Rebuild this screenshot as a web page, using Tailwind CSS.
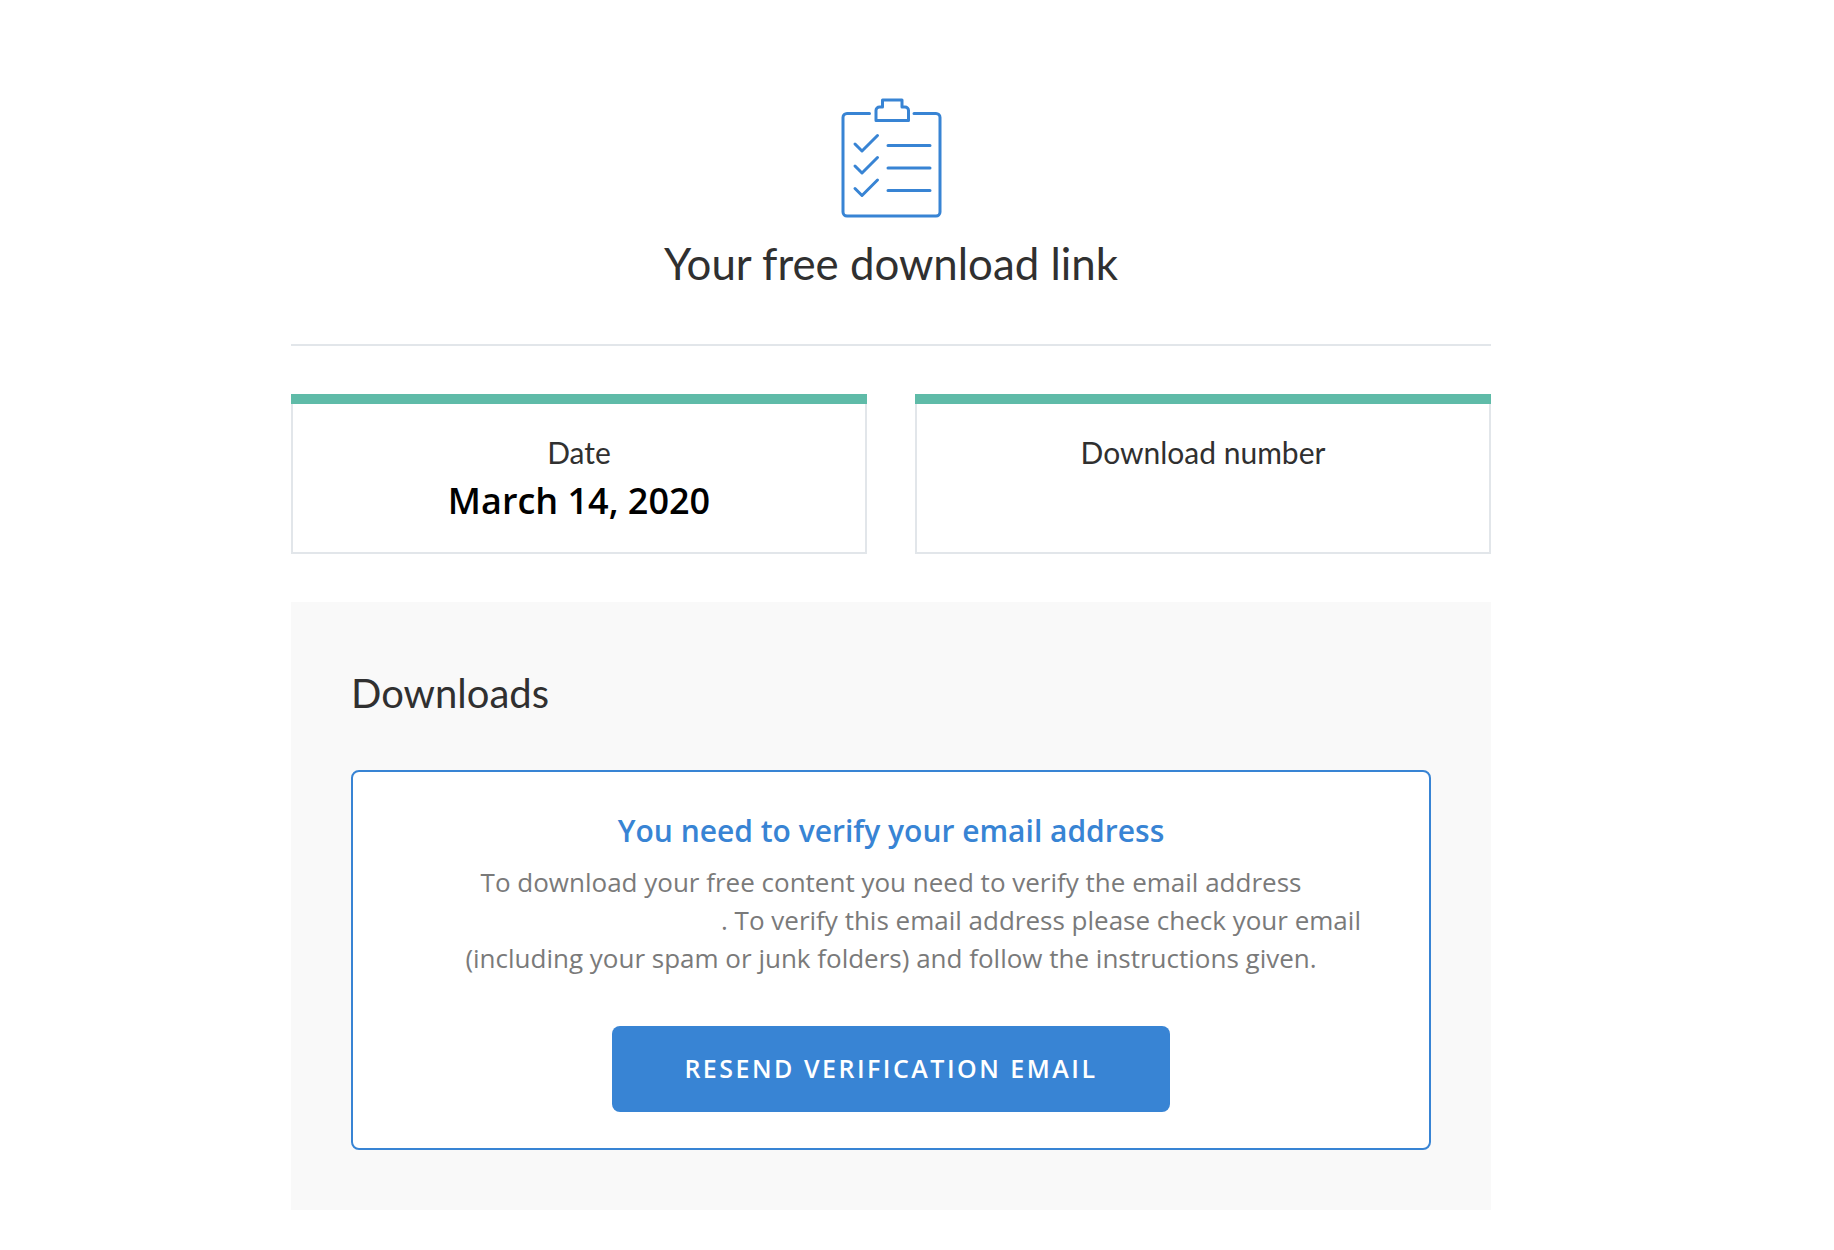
<!DOCTYPE html>
<html lang="en">
<head>
    <meta charset="UTF-8">
    <meta name="viewport" content="width=device-width, initial-scale=1.0">
    <title>Your free download link</title>
    <script src="https://cdn.jsdelivr.net/npm/@tailwindcss/browser@4"></script>
</head>
<body class="min-h-screen bg-white font-['Open_Sans',sans-serif]">
    <div class="w-[1200px] ml-[291px] pt-[98px]">
        <!-- Header -->
        <div class="flex flex-col items-center border-b-2 border-[#e2e6ea] h-[248px]">
            <svg class="w-[100px] h-[120px] shrink-0 overflow-visible" viewBox="0 0 100 120" fill="none" stroke="#3884d4" stroke-width="3" stroke-linecap="round" stroke-linejoin="round">
                <path d="M28.500 15.500H6a4 4 0 0 0-4 4V114a4 4 0 0 0 4 4h89a4 4 0 0 0 4-4V19.500a4 4 0 0 0-4-4H73"/>
                <path d="M35 22.500V12.500a3.500 3.500 0 0 1 3.500-3.500H41.500V2H61V9h3a3.500 3.500 0 0 1 3.500 3.500V22.500z"/>
                <path d="M14 46l7 7L36.500 37.500M14 68l7 7L36.500 59.500M14 90.500l7 7L36.500 82"/>
                <path d="M47 47.500H89M47 70H89M47 92.500H89"/>
            </svg>
            <h1 class="font-['Lato',sans-serif] text-[43.800px] leading-[56px] text-[#303030] mt-[17px]">Your free download link</h1>
        </div>

        <!-- Date and number -->
        <div class="grid grid-cols-2 gap-[48px] mt-[48px]">
            <div class="h-[160px] border-2 border-t-0 border-[#e2e6ea] text-center">
                <div class="h-[10px] -mx-[2px] bg-[#5fbba8]"></div>
                <div class="font-['Lato',sans-serif] text-[30px] leading-[38px] text-[#303030] mt-[29px]">Date</div>
                <div class="text-[36px] leading-[48px] font-semibold text-black mt-[6px]">March 14, 2020</div>
            </div>
            <div class="h-[160px] border-2 border-t-0 border-[#e2e6ea] text-center">
                <div class="h-[10px] -mx-[2px] bg-[#5fbba8]"></div>
                <div class="font-['Lato',sans-serif] text-[30px] leading-[38px] text-[#303030] mt-[29px]">Download number</div>
            </div>
        </div>

        <!-- Downloads -->
        <div class="bg-[#f9f9f9] mt-[48px] h-[608px] px-[60px] pt-[65px]">
            <h2 class="font-['Lato',sans-serif] text-[40px] leading-[52px] text-[#303030]">Downloads</h2>
            <div class="mt-[51px] h-[380px] bg-white border-2 border-[#3884d4] rounded-[8px] text-center pt-[39px]">
                <h3 class="text-[30px] leading-[40px] font-semibold text-[#3884d4]">You need to verify your email address</h3>
                <p class="text-[26px] leading-[38px] text-[#7a7a7a] mt-[12px]">
                    To download your free content you need to verify the email address<br>
                    <span class="inline-block w-[300px]"></span>. To verify this email address please check your email<br>
                    (including your spam or junk folders) and follow the instructions given.
                </p>
                <button class="mt-[49px] w-[558px] h-[86px] bg-[#3884d4] rounded-[8px] text-white text-[25px] font-semibold tracking-[2.500px]">RESEND VERIFICATION EMAIL</button>
            </div>
        </div>
    </div>
</body>
</html>
